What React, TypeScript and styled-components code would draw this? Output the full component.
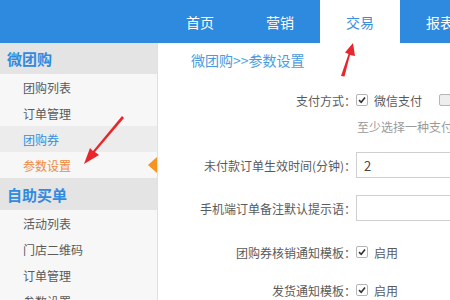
import styled, { createGlobalStyle } from "styled-components";

const GlobalStyle = createGlobalStyle`
    html, body {
        margin: 0;
        padding: 0;
        background: #ffffff;
    }
    body {
        font-family: "Noto Sans CJK SC", "Noto Sans", sans-serif;
        overflow: hidden;
    }
`;

const Page = styled.div`
    position: relative;
    width: 450px;
    height: 300px;
    overflow: hidden;
    display: flex;
    flex-direction: column;
`;

const TopBar = styled.div`
    display: flex;
    height: 43px;
    padding-left: 160px;
    background-color: #2e8ade;
    flex-shrink: 0;
`;

const NavTab = styled.div<{ $active?: boolean }>`
    width: 80px;
    flex-shrink: 0;
    display: flex;
    align-items: center;
    justify-content: center;
    font-size: 14px;
    color: ${p => (p.$active ? "#3a8ee0" : "#ffffff")};
    background-color: ${p => (p.$active ? "#ffffff" : "transparent")};
`;

const Body = styled.div`
    display: flex;
    flex: 1;
`;

const Sidebar = styled.div`
    width: 157px;
    flex-shrink: 0;
    background-color: #f7f7f7;
    border-right: 1px solid #e0e0e0;
`;

const GroupTitle = styled.div<{ $tall?: boolean }>`
    height: ${p => (p.$tall ? "32px" : "31px")};
    display: flex;
    align-items: center;
    padding-left: 7px;
    font-size: 15px;
    font-weight: bold;
    color: #2f8be0;
    background-color: #e4e4e4;
`;

const MenuItem = styled.div<{ $state?: "hover" | "active" }>`
    position: relative;
    height: 26px;
    display: flex;
    align-items: center;
    padding-left: 23px;
    font-size: 12px;
    color: ${p => (p.$state === "hover" ? "#3a8ee0" : p.$state === "active" ? "#ef8a3d" : "#5a5a5a")};
    background-color: ${p => (p.$state === "hover" ? "#ececec" : "transparent")};
`;

const Pointer = styled.span`
    position: absolute;
    right: 0;
    top: 50%;
    margin-top: -8px;
    width: 0;
    height: 0;
    border-top: 8px solid transparent;
    border-bottom: 8px solid transparent;
    border-right: 9px solid #f7931e;
`;

const Content = styled.div`
    flex: 1;
    display: flex;
    flex-direction: column;
`;

const Breadcrumb = styled.div`
    height: 34px;
    display: flex;
    align-items: center;
    padding-left: 33px;
    font-size: 14px;
    color: #4a9be0;
`;

const FormRow = styled.div<{ $top: number; $h?: number }>`
    display: flex;
    align-items: center;
    margin-top: ${p => p.$top}px;
    height: ${p => p.$h ?? 20}px;
    white-space: nowrap;
`;

const Label = styled.div`
    width: 198px;
    flex-shrink: 0;
    text-align: right;
    font-size: 12px;
    color: #5a5a5a;
`;

const Field = styled.div`
    display: flex;
    align-items: center;
    font-size: 12px;
    color: #5a5a5a;
`;

const Hint = styled.span`
    padding-left: 1px;
    font-size: 12px;
    color: #9a9a9a;
`;

const Box = styled.span<{ $checked?: boolean }>`
    width: 10px;
    height: 10px;
    border: 1px solid #b5b5b5;
    border-radius: 2px;
    background-color: ${p => (p.$checked ? "#ffffff" : "#eeeeee")};
    display: inline-flex;
    align-items: center;
    justify-content: center;
    margin-right: 6px;
    flex-shrink: 0;
`;

const OptionText = styled.span<{ $space?: number }>`
    margin-right: ${p => p.$space ?? 0}px;
`;

const TextInput = styled.div`
    width: 110px;
    height: 24px;
    border: 1px solid #cfcfcf;
    box-sizing: content-box;
    display: flex;
    align-items: center;
    padding-left: 7px;
    font-size: 13px;
    color: #444444;
`;

const Overlay = styled.svg`
    position: absolute;
    left: 0;
    top: 0;
    pointer-events: none;
`;

function CheckBox({ checked }: { checked?: boolean }) {
    return (
        <Box $checked={checked}>
            {checked && (
                <svg width="8" height="8" viewBox="0 0 8 8">
                    <path d="M1 4.2 L3.2 6.3 L7 1.5" fill="none" stroke="#333" strokeWidth="1.6" />
                </svg>
            )}
        </Box>
    );
}

const tabs = ["首页", "营销", "交易", "报表"];

export default function App() {
    return (
        <Page>
            <GlobalStyle />
            <TopBar>
                {tabs.map(t => (
                    <NavTab key={t} $active={t === "交易"}>{t}</NavTab>
                ))}
            </TopBar>
            <Body>
                <Sidebar>
                    <GroupTitle>微团购</GroupTitle>
                    <MenuItem>团购列表</MenuItem>
                    <MenuItem>订单管理</MenuItem>
                    <MenuItem $state="hover">团购券</MenuItem>
                    <MenuItem $state="active">
                        参数设置
                        <Pointer />
                    </MenuItem>
                    <GroupTitle $tall>自助买单</GroupTitle>
                    <MenuItem>活动列表</MenuItem>
                    <MenuItem>门店二维码</MenuItem>
                    <MenuItem>订单管理</MenuItem>
                    <MenuItem>参数设置</MenuItem>
                </Sidebar>
                <Content>
                    <Breadcrumb>微团购&gt;&gt;参数设置</Breadcrumb>
                    <FormRow $top={13}>
                        <Label>支付方式：</Label>
                        <Field>
                            <CheckBox checked />
                            <OptionText $space={17}>微信支付</OptionText>
                            <CheckBox />
                        </Field>
                    </FormRow>
                    <FormRow $top={6}>
                        <Label />
                        <Hint>至少选择一种支付方式</Hint>
                    </FormRow>
                    <FormRow $top={16} $h={26}>
                        <Label>未付款订单生效时间(分钟)：</Label>
                        <TextInput>2</TextInput>
                    </FormRow>
                    <FormRow $top={17} $h={26}>
                        <Label>手机端订单备注默认提示语：</Label>
                        <TextInput />
                    </FormRow>
                    <FormRow $top={21}>
                        <Label>团购券核销通知模板：</Label>
                        <Field>
                            <CheckBox checked />
                            <OptionText>启用</OptionText>
                        </Field>
                    </FormRow>
                    <FormRow $top={18}>
                        <Label>发货通知模板：</Label>
                        <Field>
                            <CheckBox checked />
                            <OptionText>启用</OptionText>
                        </Field>
                    </FormRow>
                </Content>
            </Body>
            <Overlay width="450" height="300" viewBox="0 0 450 300">
                <path d="M341 76 L344.5 76.5 L350 55 L355 56 L353 43 L345 52.5 L348.5 54 Z" fill="#e8262b" />
                <path d="M122 116 L124 118 L95 152 L99 155 L84 164 L90 148 L93 151 Z" fill="#e8262b" />
            </Overlay>
        </Page>
    );
}
